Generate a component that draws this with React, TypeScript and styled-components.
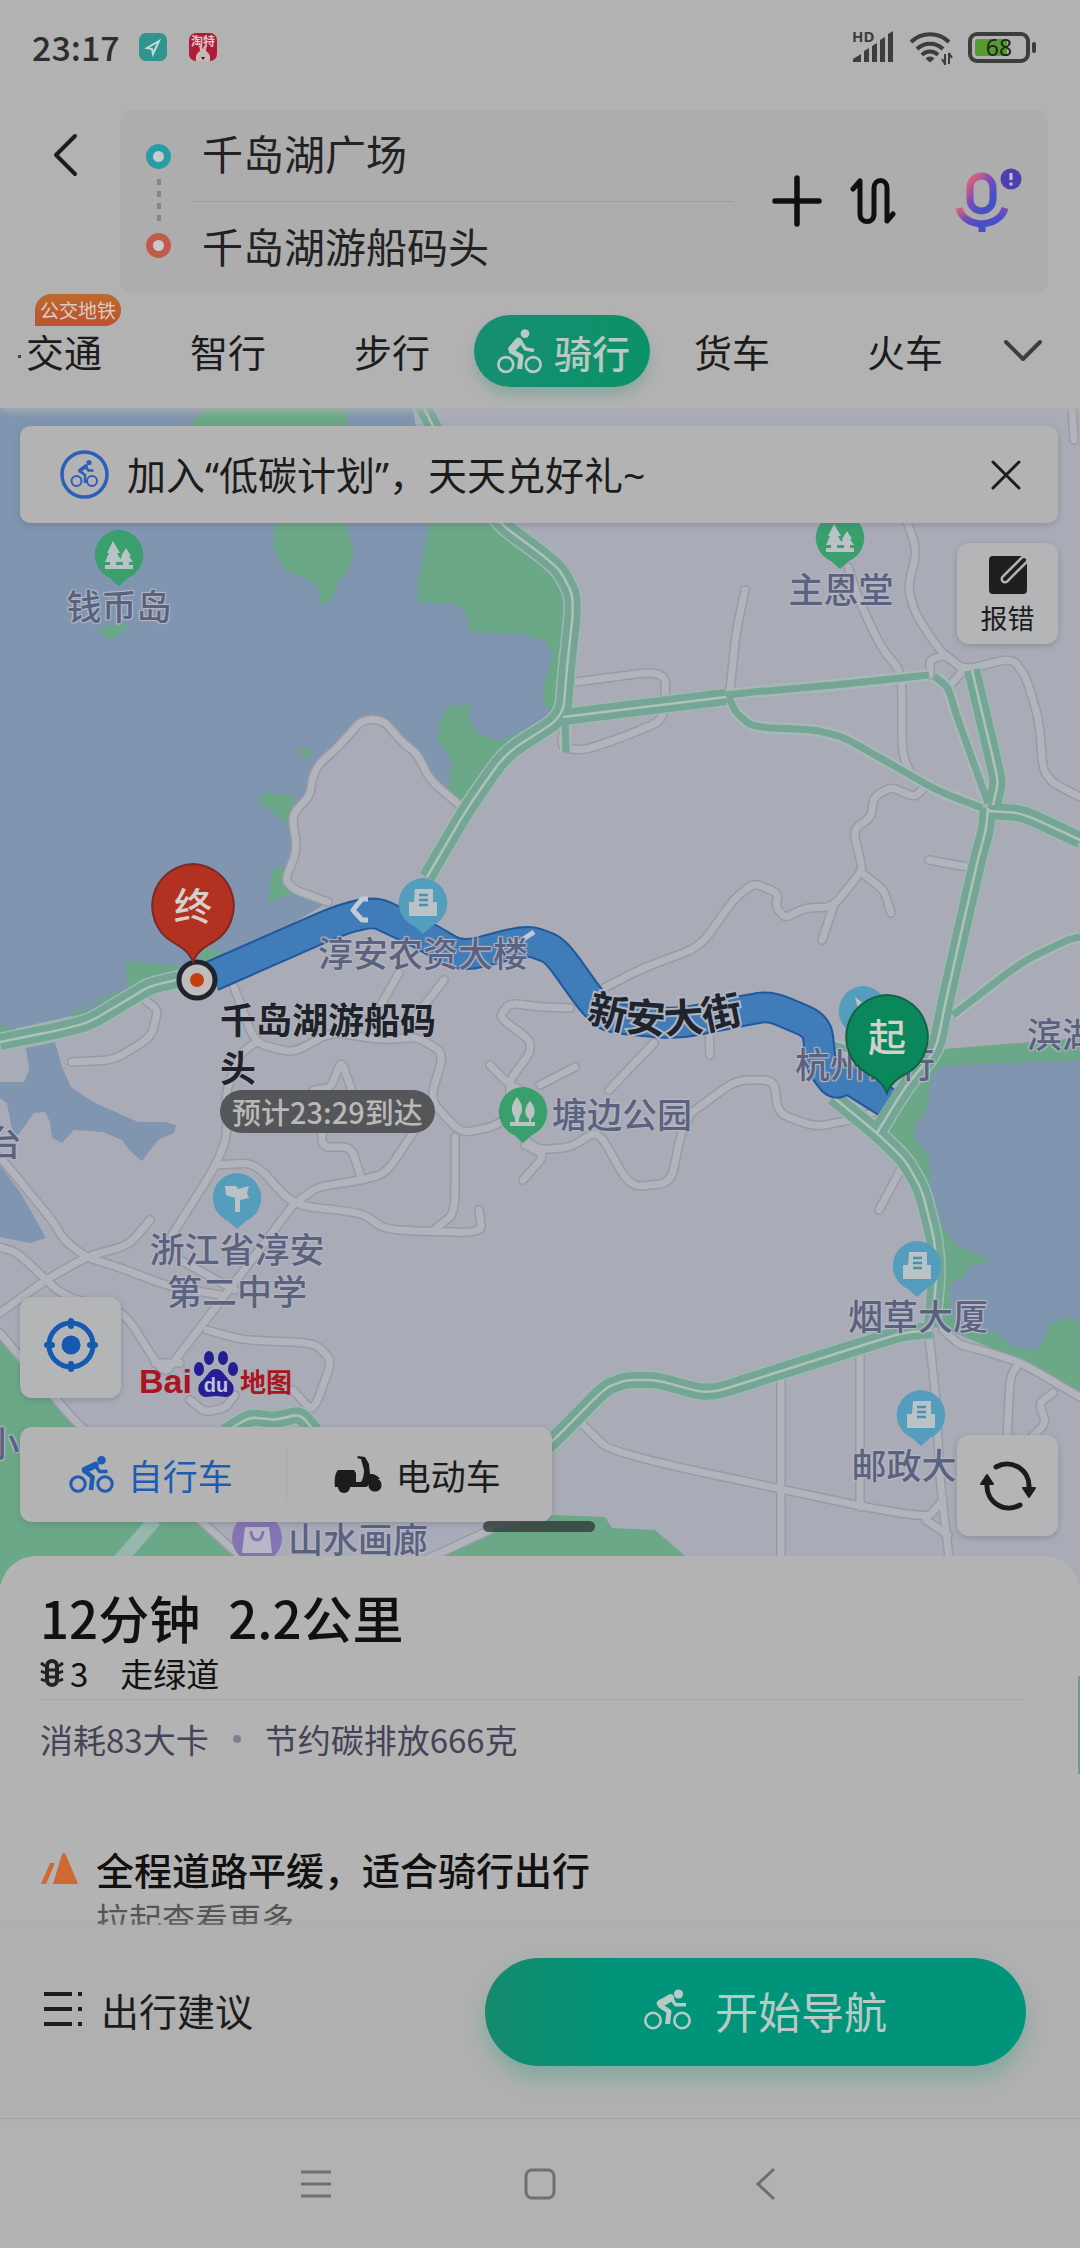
import React from "react";
import styled, { createGlobalStyle } from "styled-components";

const GlobalStyle = createGlobalStyle`
  *, *::before, *::after { box-sizing: border-box; }
  body {
    margin: 0;
    background: #b2b2b2;
    color: #1c1c1c;
    font-family: "Noto Sans CJK SC", "Liberation Sans", sans-serif;
  }
  button, input { font: inherit; color: inherit; }
  button { border: 0; margin: 0; padding: 0; background: none; cursor: pointer; }
  svg { display: block; flex: none; }
  h1, h2, p { margin: 0; font-weight: inherit; font-size: inherit; }
`;

/* ---------- shell ---------- */

const Page = styled.div`
  display: flex;
  flex-direction: column;
  min-height: 100vh;
  overflow: hidden;
`;

const StatusBar = styled.div`
  display: flex;
  align-items: center;
  justify-content: space-between;
  height: 96px;
  padding: 0 42px 2px 32px;
`;

const StatusGroup = styled.div<{ $gap: number }>`
  display: flex;
  align-items: center;
  gap: ${(p) => p.$gap}px;
`;

const Clock = styled.span`
  font-size: 34px;
  line-height: 40px;
  font-weight: 500;
  color: #2e2e2e;
`;

const AppBadge = styled.span<{ $color: string }>`
  display: block;
  width: 28px;
  height: 28px;
  border-radius: 7px;
  overflow: hidden;
  background: ${(p) => p.$color};
`;

/* ---------- header ---------- */

const Header = styled.header`
  position: relative;
  z-index: 3;
  background: #b2b2b2;
  box-shadow: 0 3px 8px rgba(176, 176, 180, 0.9);
`;

const SearchRow = styled.div`
  display: flex;
  align-items: flex-start;
  padding: 14px 32px 0 0;
`;

const BackButton = styled.button`
  display: flex;
  justify-content: center;
  width: 120px;
  padding: 22px 0 0 12px;
`;

const SearchCard = styled.div`
  flex: 1;
  display: flex;
  align-items: center;
  height: 182px;
  padding: 0 26px;
  border-radius: 10px;
  background: #adadad;
`;

const StopMarks = styled.div`
  display: flex;
  flex-direction: column;
  align-items: center;
  gap: 7px;
  width: 25px;
`;

const Ring = styled.span<{ $color: string }>`
  width: 25px;
  height: 25px;
  border-radius: 50%;
  border: 7px solid ${(p) => p.$color};
  background: #c6cccc;
`;

const Dots = styled.span`
  width: 4px;
  height: 44px;
  margin: 3px 0;
  background: repeating-linear-gradient(#858589 0 6px, transparent 6px 12px);
`;

const Stops = styled.div`
  flex: 1;
  min-width: 0;
  margin: 0 38px 0 21px;
`;

const StopInput = styled.input`
  display: block;
  width: 100%;
  height: 93px;
  padding: 0 0 6px 10px;
  border: 0;
  outline: 0;
  background: none;
  font-size: 41px;
  color: #222;
  & + & { border-top: 1px solid #9c9c9c; }
`;

const SearchTools = styled.div`
  display: flex;
  align-items: center;
  gap: 28px;
`;

const MicButton = styled.button`
  margin-left: 30px;
`;

const Tabs = styled.nav`
  display: flex;
  align-items: center;
  height: 72px;
  margin: 23px 0 0;
  padding: 0 36px 0 18px;
`;

const HeaderFoot = styled.div`
  height: 21px;
`;

const Tab = styled.button<{ $before?: number; $after?: number }>`
  position: relative;
  flex: none;
  padding: 0 ${(p) => p.$after ?? 44}px 0 ${(p) => p.$before ?? 44}px;
  font-size: 38px;
  line-height: 56px;
  white-space: nowrap;
`;

const TabDot = styled.span`
  display: inline-block;
  width: 3px;
  height: 3px;
  margin-right: 5px;
  vertical-align: middle;
  background: #444;
`;

const ActiveTab = styled.button`
  flex: none;
  display: flex;
  align-items: center;
  gap: 12px;
  height: 72px;
  padding: 0 20px 0 23px;
  border-radius: 36px;
  background: linear-gradient(100deg, #178f71, #0b9168);
  box-shadow: 0 8px 12px rgba(70, 150, 125, 0.35);
  color: #b9c9c5;
  font-size: 38px;
  font-weight: 500;
  white-space: nowrap;
`;

const TabTag = styled.span`
  position: absolute;
  left: 17px;
  top: -29px;
  height: 32px;
  padding: 0 5px;
  border-radius: 16px 16px 16px 0;
  background: linear-gradient(#bb6a2e, #bb5230);
  color: #dccbc2;
  font-size: 19px;
  line-height: 32px;
`;

const MoreTabs = styled.button`
  margin-left: auto;
`;

/* ---------- map ---------- */

const MapArea = styled.main`
  position: relative;
  flex: 1;
  display: flex;
  flex-direction: column;
  min-height: 1176px;
  padding: 18px 22px 48px 20px;
  overflow: hidden;
  background: #a9acb6;
`;

const MapCanvas = styled.svg`
  position: absolute;
  inset: 0;
  width: 100%;
  height: 100%;
`;

const Marker = styled.div<{ $x: number; $y: number }>`
  position: absolute;
  left: calc(50% + ${(p) => p.$x - 540}px);
  top: ${(p) => p.$y - 408}px;
  transform: translate(-50%, -50%);
`;

const PlaceLabel = styled.span`
  display: block;
  font-size: 35px;
  line-height: 42px;
  font-weight: 500;
  text-align: center;
  white-space: pre;
  color: #5a6280;
  text-shadow: 1px 1px 1px #b4b7c2, -1px -1px 1px #b4b7c2, 1px -1px 1px #b4b7c2, -1px 1px 1px #b4b7c2;
`;

const Destination = styled.div`
  position: absolute;
  left: calc(50% - 320px);
  top: 586px;
  width: 218px;
  font-size: 36px;
  line-height: 48px;
  font-weight: 700;
  color: #20222a;
  text-shadow: 0 0 2px #b9bbc3, 0 0 2px #b9bbc3;
`;

const Eta = styled.span`
  display: block;
  width: max-content;
  height: 43px;
  padding: 0 12px;
  border-radius: 22px;
  background: #55565a;
  color: #b9b9b9;
  font-size: 29px;
  line-height: 43px;
  font-weight: 500;
  text-shadow: none;
`;

const PinText = styled.span`
  position: absolute;
  left: 0;
  right: 0;
  top: 14px;
  text-align: center;
  font-size: 38px;
  line-height: 56px;
  font-weight: 500;
  color: #d5d0cc;
`;

const Banner = styled.section`
  position: relative;
  display: flex;
  align-items: center;
  height: 97px;
  padding: 0 36px 0 40px;
  border-radius: 10px;
  background: #b3b3b4;
  box-shadow: 0 2px 6px rgba(90, 95, 110, 0.35);
`;

const BannerText = styled.p`
  flex: 1;
  margin-left: 18px;
  font-family: "Noto Sans", "Noto Sans CJK SC", sans-serif;
  font-size: 39px;
  line-height: 56px;
  white-space: nowrap;
`;

const FloatButton = styled.button`
  position: relative;
  display: flex;
  flex-direction: column;
  align-items: center;
  justify-content: center;
  gap: 8px;
  flex: none;
  width: 101px;
  height: 101px;
  border-radius: 12px;
  background: #b4b5b6;
  box-shadow: 0 2px 6px rgba(90, 95, 110, 0.35);
  font-size: 27px;
  line-height: 30px;
`;

const MapTop = styled.div`
  display: flex;
  justify-content: flex-end;
  margin: 20px 0 auto;
`;

const MapBottom = styled.div`
  display: flex;
  justify-content: space-between;
  height: 109px;
  margin-top: 29px;
`;

const LocateRow = styled.div`
  position: relative;
  display: flex;
  align-items: flex-end;
  gap: 18px;
`;

const Logo = styled.div`
  display: flex;
  align-items: flex-end;
  gap: 2px;
  color: #a81620;
  font-weight: 700;
`;

const LogoLatin = styled.span`
  font-family: "Liberation Sans", sans-serif;
  font-size: 34px;
  line-height: 34px;
`;

const LogoHan = styled.span`
  font-size: 26px;
  line-height: 34px;
`;

const ModeSwitch = styled.div`
  position: relative;
  display: flex;
  align-items: center;
  width: 532px;
  height: 95px;
  border-radius: 12px;
  background: #b3b3b4;
  box-shadow: 0 2px 6px rgba(90, 95, 110, 0.35);
`;

const Mode = styled.button<{ $active?: boolean }>`
  flex: 1;
  display: flex;
  align-items: center;
  justify-content: center;
  gap: 14px;
  height: 52px;
  padding-right: 4px;
  font-size: 35px;
  color: ${(p) => (p.$active ? "#1d5cb4" : "#1c1c1c")};
  & + & { border-left: 1px solid #a6a6a8; }
`;

const RefreshButton = styled(FloatButton)`
  align-self: flex-end;
`;

const Handle = styled.span`
  position: absolute;
  left: calc(50% - 57px);
  bottom: 52px;
  width: 112px;
  height: 11px;
  border-radius: 6px;
  background: rgba(50, 58, 56, 0.8);
`;

/* ---------- sheet ---------- */

const Sheet = styled.section`
  position: relative;
  z-index: 2;
  margin-top: -28px;
  padding: 29px 56px 0 40px;
  border-radius: 36px 36px 0 0;
  background: #b3b3b3;
  color: #111;
`;

const EdgeMark = styled.span`
  position: absolute;
  right: 0;
  top: 120px;
  width: 2px;
  height: 98px;
  background: #6f9c86;
`;

const Summary = styled.h1`
  display: flex;
  gap: 28px;
  font-size: 51px;
  line-height: 64px;
  font-weight: 500;
`;

const InfoRow = styled.div`
  display: flex;
  align-items: center;
  gap: 6px;
  padding-bottom: 2px;
  font-size: 33px;
  line-height: 48px;
  border-bottom: 1px solid #a8a8a8;
`;

const RoadNote = styled.span`
  margin-left: 26px;
`;

const Stats = styled.p`
  display: flex;
  align-items: center;
  gap: 24px;
  margin-top: 15px;
  font-size: 33px;
  line-height: 48px;
  color: #444357;
`;

const Bullet = styled.span`
  width: 8px;
  height: 8px;
  border-radius: 50%;
  background: #80808c;
`;

const Advice = styled.div`
  display: flex;
  align-items: center;
  gap: 18px;
  margin-top: 82px;
`;

const AdviceTitle = styled.h2`
  font-size: 38px;
  line-height: 48px;
  font-weight: 500;
`;

const Peek = styled.p`
  height: 32px;
  padding-left: 56px;
  overflow: hidden;
  font-size: 33px;
  line-height: 50px;
  color: #555;
`;

const ActionBar = styled.div`
  position: relative;
  z-index: 2;
  display: flex;
  align-items: center;
  justify-content: space-between;
  padding: 33px 54px 52px 42px;
  background: #b0b0b0;
  border-bottom: 1px solid #a2a2a2;
  box-shadow: 0 -2px 6px rgba(160, 160, 160, 0.4);
`;

const TipsButton = styled.button`
  display: flex;
  align-items: center;
  gap: 17px;
  padding-bottom: 6px;
  font-size: 38px;
`;

const StartButton = styled.button`
  display: flex;
  align-items: center;
  justify-content: center;
  gap: 24px;
  width: 55%;
  height: 108px;
  padding: 0 0 5px 20px;
  border-radius: 54px;
  background: linear-gradient(90deg, #168a6c, #00947a 24%);
  box-shadow: 0 12px 20px rgba(60, 160, 130, 0.4);
  color: #b9c9c5;
  font-size: 43px;
`;

const SystemNav = styled.nav`
  display: flex;
  align-items: center;
  justify-content: center;
  gap: 192px;
  height: 129px;
  color: #6f6f6f;
`;

/* ---------- icons ---------- */

const Cyclist = () => (
  <svg width="45" height="37" viewBox="0 0 45 37" fill="none" stroke="currentColor" strokeLinejoin="round">
    <circle cx="9" cy="28" r="7.2" strokeWidth="3" />
    <circle cx="36" cy="28" r="7.2" strokeWidth="3" />
    <circle cx="32.5" cy="4.3" r="4.2" fill="currentColor" stroke="none" />
    <path d="M26.5 9 16 14" strokeWidth="6.5" strokeLinecap="round" />
    <path d="M15.5 15 23.5 21 22 34" strokeWidth="4.6" />
    <path d="M26 9 30.5 15.5H38.500" strokeWidth="3.4" />
  </svg>
);

const UprightCyclist = () => (
  <svg width="45" height="45" viewBox="0 0 45 45" fill="none" stroke="currentColor" strokeLinejoin="round">
    <circle cx="8.800" cy="35.500" r="7.400" strokeWidth="2.600" />
    <circle cx="36.200" cy="35.500" r="7.400" strokeWidth="2.600" />
    <circle cx="28" cy="4.600" r="4.400" fill="currentColor" stroke="none" />
    <path d="M21.500 12.500 15 20" strokeWidth="7.500" strokeLinecap="round" />
    <path d="M13 21.500 24 27.500 22.500 40" strokeWidth="5" />
    <path d="M23 12 28.500 20 37 21.500" strokeWidth="3.600" />
  </svg>
);

const RacingCyclist = () => (
  <svg width="47" height="41" viewBox="0 0 47 41" fill="none" stroke="currentColor" strokeLinejoin="round">
    <circle cx="9" cy="31.500" r="7.700" strokeWidth="2.600" />
    <circle cx="38" cy="31.500" r="7.700" strokeWidth="2.600" />
    <circle cx="34.500" cy="5" r="4.600" fill="currentColor" stroke="none" />
    <path d="M26.500 9 16.500 14.500" strokeWidth="7.500" strokeLinecap="round" />
    <path d="M15.500 16 25 22.500 23.500 35" strokeWidth="5" />
    <path d="M27 9 31.500 15.800H42" strokeWidth="3.400" />
  </svg>
);

const Scooter = () => (
  <svg width="48" height="38" viewBox="0 0 48 38" fill="currentColor">
    <path d="M4 14h16l2 3v9h5c2-3 3-7 3-12L27 3l-4-1 1-2 7 1 4 7 1 10c5 0 8 2 10 5h-5c-4 0-5 3-7 7l-2 1H1C0 24 1 17 4 14Z" />
    <path d="M4 31h12a6 6 0 0 1-12 0Z" />
    <circle cx="41" cy="29" r="6.6" />
  </svg>
);

const BannerBike = () => (
  <svg width="49" height="49" viewBox="0 0 49 49" fill="none" stroke="#2c5fb8">
    <circle cx="24.500" cy="24.500" r="22.500" strokeWidth="3.500" />
    <circle cx="16.500" cy="31" r="5" strokeWidth="2" />
    <circle cx="32" cy="31" r="5" strokeWidth="2" />
    <circle cx="29" cy="12.500" r="2.600" fill="#2c5fb8" stroke="none" />
    <path d="M26 16 20 20.500" strokeWidth="4" strokeLinecap="round" />
    <path d="M19.500 21 25 25v8M25.500 16.500l3 4h5" strokeWidth="2.500" />
  </svg>
);

const SignalIcon = () => (
  <svg width="42" height="34" viewBox="0 0 42 34" fill="#3d3d3d" overflow="visible">
    <text x="0" y="12" fontSize="15" fontWeight="700" fontFamily="Noto Sans, sans-serif">HD</text>
    <path d="M1 32v-3l8-5v8ZM12 32V21l5-3v14ZM20 32V16l5-3v19ZM28 32V10l5-3v25ZM36 32V4l5-3v31Z" />
  </svg>
);

const WifiIcon = () => (
  <svg width="44" height="36" viewBox="0 0 44 36" fill="none" stroke="#3d3d3d" strokeWidth="4">
    <path d="M2 13a27 27 0 0 1 38 0M8 20a18.500 18.500 0 0 1 26 0M13 26a11 11 0 0 1 16 0" />
    <path d="m16.500 29.500 4.500 4 4.500-4a6 6 0 0 0-9 0Z" fill="#3d3d3d" stroke="none" />
    <path d="M36 36V25M40 24v11M33 30l3 5M43 29l-3-5" strokeWidth="2" />
  </svg>
);

const BatteryIcon = () => (
  <svg width="70" height="32" viewBox="0 0 70 32">
    <rect x="2" y="3" width="58" height="27" rx="7" fill="none" stroke="#3d3d3d" strokeWidth="4" />
    <rect x="7" y="8" width="32" height="17" rx="3" fill="#569a34" />
    <rect x="64" y="11" width="4" height="11" rx="2" fill="#3d3d3d" />
    <text x="31" y="25" textAnchor="middle" fontSize="23" fontFamily="Noto Sans, sans-serif" fill="#1b2a14">68</text>
  </svg>
);

const MicIcon = () => (
  <svg width="68" height="68" viewBox="0 0 68 68" fill="none">
    <defs>
      <linearGradient id="mic" x1="0.1" y1="0" x2="0.7" y2="0.8">
        <stop offset="0.1" stopColor="#cf5f80" />
        <stop offset="0.55" stopColor="#7b4bb8" />
        <stop offset="1" stopColor="#4550c8" />
      </linearGradient>
    </defs>
    <rect x="16" y="9" width="23" height="35" rx="11.500" stroke="url(#mic)" strokeWidth="7" />
    <path d="M5 41c5 21 40 21 46 0" stroke="url(#mic)" strokeWidth="7" />
    <path d="M28 56v9" stroke="#4550c8" strokeWidth="7" />
    <circle cx="57" cy="12" r="10.500" fill="#4c3fae" />
    <path d="M57 6v7M57 15.500v3" stroke="#c5c2d8" strokeWidth="3" />
  </svg>
);

type PinKind = "trees" | "office" | "school" | "ferns" | "plain";

const glyphs: Record<PinKind, React.ReactNode> = {
  trees: <path d="m20 12 7 12h-3l5 9h-6v3h7v-3h-4l3-6h-1l5-8 5 8h-2l4 6h-4v3h4v4H12v-4h5v-3h-5l4-9h-2Z" />,
  ferns: <path d="M20 11c5 6 7 13 3 19l-1 3v3h10v-3c-6-4-4-13 1-18 5 5 7 14 1 18v3h4v4H13v-4h5v-3l-1-3c-4-6-2-13 3-19Z" />,
  office: (
    <>
      <path d="M18 12h18v13h4v14H12V25h5Z" />
      <path d="M22 18h9M22 23h9M22 28h9" stroke="#4a90b4" strokeWidth="2.500" />
    </>
  ),
  school: <path d="M14 14h11l2 3 11-3-2 7 2 5-9 2v12h-5V26l-9-3Z" />,
  plain: <path d="m18 12 12 9-9 3Z" />,
};

const Pin = ({ kind, x, y }: { kind: PinKind; x: number; y: number }) => (
  <Marker $x={x} $y={y + 4}>
    <svg width="52" height="58" viewBox="0 0 52 58">
      <path
        d="M26 1a25 25 0 0 0-9 48l9 8 9-8a25 25 0 0 0-9-48Z"
        fill={kind === "trees" || kind === "ferns" ? "#389f6d" : "#559dbd"}
      />
      <g fill="#b9c3c6">{glyphs[kind]}</g>
    </svg>
  </Marker>
);

const EndPin = ({ x, y, color, edge, children }: { x: number; y: number; color: string; edge: string; children: string }) => (
  <Marker $x={x} $y={y}>
    <svg width="88" height="104" viewBox="0 0 88 104">
      <path
        d="M44 2a42 42 0 0 0-22 77c10 6 18 10 22 21 4-11 12-15 22-21a42 42 0 0 0-22-77Z"
        fill={color}
        stroke={edge}
        strokeWidth="2"
      />
    </svg>
    <PinText>{children}</PinText>
  </Marker>
);

/* ---------- map data ---------- */

const smooth = (points: string) => {
  const p = points.split(" ").map((s) => s.split(",").map(Number));
  let d = `M${p[0]}`;
  for (let i = 1; i < p.length - 1; i++) {
    const ax = p[i][0] + (p[i - 1][0] - p[i][0]) * 0.3;
    const ay = p[i][1] + (p[i - 1][1] - p[i][1]) * 0.3;
    const bx = p[i][0] + (p[i + 1][0] - p[i][0]) * 0.3;
    const by = p[i][1] + (p[i + 1][1] - p[i][1]) * 0.3;
    d += `L${ax},${ay}Q${p[i]} ${bx},${by}`;
  }
  return `${d}L${p[p.length - 1]}`;
};

const lanes = [
  "463,808 430,780 418,755 400,740 385,722 372,719 360,722 340,745 318,765 312,780 310,795 292,815 297,850 285,880 295,890 328,902",
  "745,590 736,633 730,690",
  "848,567 860,603 881,647 902,673 902,753 912,777 935,790",
  "903,510 917,550 908,587 915,613 939,650 964,670 1012,658 1026,677 1039,720 1043,770 1053,783 1080,797",
  "930,675 930,660 945,655 964,670 950,685",
  "576,682 666,670 664,720 623,737 585,750 561,748 565,720",
  "922,790 914,797 891,787 874,797 871,817 853,830 862,867 860,873 833,907 805,908 785,918 776,907 778,893 754,883 733,900 700,947 643,968 604,988",
  "862,873 884,890 891,913",
  "833,908 822,940",
  "929,860 967,867",
  "234,987 255,1043 293,1053 331,1032 382,1040 417,1037 444,1053 430,1100 461,1133 492,1127 512,1115",
  "255,1043 241,1053 226,1090 227,1137 215,1167 172,1235",
  "215,1165 255,1163 293,1205 362,1213 386,1230 482,1233 479,1210",
  "293,1205 317,1187 362,1180 386,1173 415,1130 427,1110",
  "362,1180 351,1147 322,1147 322,1120 310,1090 331,1088 341,1060 351,1088",
  "455,1137 455,1213 434,1230",
  "399,973 382,1003",
  "444,980 413,1020",
  "570,1008 540,1007 510,1003 499,1017 530,1040 530,1053 510,1080 510,1095",
  "490,1065 510,1085 540,1100",
  "654,1043 609,1090",
  "709,1030 710,1055",
  "575,1067 540,1085",
  "691,1113 736,1080 774,1080 778,1113 815,1127 850,1120 874,1112",
  "525,1140 540,1150 571,1147 598,1130 630,1187 671,1183 681,1133 691,1113",
  "525,1145 545,1155 523,1180",
  "902,1167 879,1210",
  "72,1062 114,1060 151,1037 158,1010 145,1000",
  "0,1157 52,1220 64,1240 86,1257 118,1267 171,1287 221,1295",
  "150,1220 129,1245 86,1257 46,1280 0,1313",
  "0,1247 18,1253 64,1297 123,1310 164,1375 179,1355 229,1290 293,1205",
  "180,1260 235,1290",
  "155,1363 180,1363",
  "207,1330 243,1340 314,1343 332,1360 318,1400 311,1410 293,1390",
  "0,1333 71,1417 90,1435",
  "200,1520 240,1556",
  "425,1560 490,1530",
  "581,1423 612,1453 926,1520 943,1500",
  "929,1335 936,1400 940,1480 952,1584",
  "781,1377 781,1584",
  "860,1353 860,1507",
  "943,1330 960,1345 981,1350 1022,1363 1080,1397",
  "1019,1363 1010,1377 1007,1440",
  "1053,1393 1039,1403 1046,1423 1029,1440",
  "926,1520 948,1535",
  "190,1400 205,1412 225,1408 235,1395",
  "1072,405 1074,440",
];

const avenues = [
  "420,400 440,440 499,523 540,553 560,570 572,593 573,613 567,667 563,717 506,753 468,807 427,877",
  "563,717 726,697",
  "972,670 995,767 998,783 993,805",
  "988,811 1022,813 1080,840",
  "988,808 986,830 979,855 967,907 946,1000 936,1050 905,1087 877,1133",
  "833,1097 877,1133 905,1160 922,1190 934,1238 937,1270 932,1327",
  "932,1330 902,1333 857,1347 778,1372 719,1391 700,1392 657,1380 626,1380 605,1388 554,1440 520,1470",
  "0,1042 60,1030 90,1022 130,998 150,986 185,978",
  "225,1432 250,1417 275,1420 300,1414 318,1435",
];

const singles = [
  "726,695 753,692 836,685 929,675",
  "934,676 948,687 957,717 988,803",
  "729,698 736,713 753,727 815,730 843,737 884,760 936,790 982,808",
  "953,1015 1022,962 1067,940 1080,937",
  "565,717 566,752",
  "833,1045 850,1050",
];

const route = "212,976 367,908 420,933 461,957 527,940 555,950 593,1003 610,1018 678,1024 736,1012 770,1006 817,1026 821,1065 835,1084 848,1078 886,1102";

const MapDrawing = () => (
  <MapCanvas viewBox="0 408 1080 1176" preserveAspectRatio="xMidYMin slice" aria-hidden="true">
    <g fill="#7f95b0">
      <path d="M0 400H412L430 522 560 560 568 640 560 717 510 745 463 808 430 780 418 755 400 740 385 722 372 719 340 745 318 765 310 795 292 815 297 850 285 880 328 902 220 968 128 990 90 1012 0 1032Z" />
      <path d="M26 1048 55 1042 62 1067 71 1087 93 1102 138 1122 165 1122 176 1125 174 1133 158 1140 142 1161 129 1150 122 1140 103 1132 74 1130 62 1143 52 1138 50 1122 45 1112 34 1113 24 1127 14 1140 7 1103 0 1098V1082H24L29 1070Z" />
      <path d="M0 1165 22 1195 46 1238 30 1243 0 1237Z" />
    </g>
    <path d="M412 400 440 400 450 440 560 570 500 522 430 522Z" fill="#a9acb6" />
    <g fill="#6ba888">
      <path d="M190 425 205 408H350L345 430H190ZM275 520H345L354 555 345 575 337 582 333 598 321 606 316 584 285 570 273 545Z" />
      <path d="M430 520H495L540 555 565 590 568 640 563 717 556 714 544 705 543 690 553 655 545 640 520 634 470 632 466 612 455 604 417 602 419 575Z" />
      <path d="M440 720 450 706 472 704 468 718 480 735 500 741 560 712 506 753 465 806 448 790 452 760 438 740Z" />
      <path d="M97 628 130 623 122 633 110 640ZM296 750 313 748 309 760ZM258 800 265 792 295 797 288 825ZM272 870 284 866 283 880 298 893 268 902ZM125 961 178 966 190 975 140 990 70 1012 128 988ZM0 1025 18 1030 0 1034ZM200 945 228 955 210 970 200 970ZM70 1012 100 1010 75 1020Z" />
      <path d="M944 1049 1080 1038V1400L1020 1360 960 1335 935 1325 940 1240 930 1195 905 1150 877 1133Z" />
      <path d="M0 1340 90 1432 210 1522 245 1560V1584H0ZM245 1560 420 1556 490 1530 555 1515 605 1517 612 1528 655 1530 690 1560V1584H245Z" />
    </g>
    <path
      d="M1080 1060 955 1065 939 1068 931 1077 926 1113 915 1123 914 1137 929 1157 931 1197 940 1220 953 1243 974 1253 991 1260 967 1267 964 1278 950 1283V1313L967 1330 998 1333 1012 1347 1036 1350 1046 1337 1050 1323 1067 1318 1080 1322Z"
      fill="#7f95b0"
    />
    <path d="m240 1556 15-10-50-28H490v12l-60 28Z" fill="#a9acb8" />
    <path d="M120 1560 155 1520" stroke="#97b7ac" strokeWidth="14" />
    <g fill="none" strokeLinecap="round">
      {lanes.map((l) => <path key={l} d={smooth(l)} stroke="#989aa5" strokeWidth="10" />)}
      {lanes.map((l) => <path key={l} d={smooth(l)} stroke="#b2b4bb" strokeWidth="7" />)}
    </g>
    <g fill="none">
      {singles.map((l) => <path key={l} d={smooth(l)} stroke="#a7b8b6" strokeWidth="12" />)}
      {avenues.map((l) => <path key={l} d={smooth(l)} stroke="#9cbab1" strokeWidth="19" />)}
      {singles.map((l) => <path key={l} d={smooth(l)} stroke="#74a595" strokeWidth="7" />)}
      {avenues.map((l) => <path key={l} d={smooth(l)} stroke="#74a595" strokeWidth="16" />)}
      {avenues.map((l) => <path key={l} d={smooth(l)} stroke="#acc3b9" strokeWidth="2.500" />)}
    </g>
    <g fill="none" strokeLinejoin="round">
      <path d={smooth(route)} stroke="#20589b" strokeWidth="32" />
      <path d={smooth(route)} stroke="#3f7cb8" strokeWidth="28" />
      <path d="M368 899h-6l-9 11 9 10h6" stroke="#c0cbd6" strokeWidth="5" />
      <path d="m534 932-12 8" stroke="#c0cbd6" strokeWidth="5" />
    </g>
    <circle cx="197" cy="980" r="18" fill="#bebcbc" stroke="#22232a" strokeWidth="5" />
    <circle cx="197" cy="980" r="7" fill="#c43e10" />
  </MapCanvas>
);

const StreetName = () => (
  <MapCanvas viewBox="0 408 1080 1176" preserveAspectRatio="xMidYMin slice">
    <path id="street" d="M586 1021Q672 1048 770 1014" fill="none" />
    <text
      fontSize="40"
      fontWeight="700"
      fill="#20242e"
      stroke="#aeb4bf"
      strokeWidth="4"
      paintOrder="stroke"
      fontFamily="Noto Sans CJK SC, sans-serif"
    >
      <textPath href="#street">新安大街</textPath>
    </text>
  </MapCanvas>
);

const labels: { x: number; y: number; text: string }[] = [
  { x: 119, y: 605, text: "钱币岛" },
  { x: 841, y: 588, text: "主恩堂" },
  { x: 423, y: 952, text: "淳安农资大楼" },
  { x: 622, y: 1113, text: "塘边公园" },
  { x: 237, y: 1269, text: "浙江省淳安\n第二中学" },
  { x: 918, y: 1315, text: "烟草大厦" },
  { x: 904, y: 1464, text: "邮政大" },
  { x: 358, y: 1538, text: "山水画廊" },
  { x: 1062, y: 1033, text: "滨湖" },
  { x: 865, y: 1063, text: "杭州银行" },
  { x: 4, y: 1141, text: "台" },
  { x: 2, y: 1442, text: "小" },
];

/* ---------- page ---------- */

export default function App() {
  return (
    <>
      <GlobalStyle />
      <Page>
        <Header>
          <StatusBar>
            <StatusGroup $gap={19}>
              <Clock>23:17</Clock>
              <StatusGroup $gap={22}>
                <AppBadge $color="#31958f">
                  <svg width="28" height="28" viewBox="0 0 28 28" fill="none" stroke="#c3dad8" strokeWidth="2">
                    <path d="m20 8-12 7 5 1 1 5Z" />
                  </svg>
                </AppBadge>
                <AppBadge $color="#b01c38">
                  <svg width="28" height="28" viewBox="0 0 28 28">
                    <text x="14" y="13" textAnchor="middle" fontSize="12" fontWeight="700" fill="#dcc9cb">淘特</text>
                    <path d="M11 12c3 0 2 3 3 4 1-1 0-4 3-4 1 2 0 4 0 6 5 3 4 7 4 10H7c0-3-1-7 4-10 0-2-1-4 0-6Z" fill="#c9b9b2" />
                    <path d="M12 24h4l-2 3Z" fill="#301418" />
                  </svg>
                </AppBadge>
              </StatusGroup>
            </StatusGroup>
            <StatusGroup $gap={15}>
              <SignalIcon />
              <WifiIcon />
              <BatteryIcon />
            </StatusGroup>
          </StatusBar>

          <SearchRow>
            <BackButton aria-label="返回">
              <svg width="30" height="46" viewBox="0 0 30 46" fill="none" stroke="#1c1c1c" strokeWidth="4" strokeLinecap="round" strokeLinejoin="round">
                <path d="M24 4 5 23l19 19" />
              </svg>
            </BackButton>
            <SearchCard>
              <StopMarks>
                <Ring $color="#2a9ca6" />
                <Dots />
                <Ring $color="#c25a4c" />
              </StopMarks>
              <Stops>
                <StopInput aria-label="起点" defaultValue="千岛湖广场" />
                <StopInput aria-label="终点" defaultValue="千岛湖游船码头" />
              </Stops>
              <SearchTools>
                <button aria-label="添加途经点">
                  <svg width="50" height="52" viewBox="0 0 50 52" stroke="#101010" strokeWidth="5.500" strokeLinecap="round">
                    <path d="M25 3v46M3 26h44" />
                  </svg>
                </button>
                <button aria-label="交换起终点">
                  <svg width="46" height="48" viewBox="0 0 46 48" fill="none" stroke="#101010" strokeWidth="5" strokeLinecap="round" strokeLinejoin="round">
                    <path d="M3 13 11 4v32a8 8 0 0 0 16 0V11a7 7 0 0 1 13 0" stroke="none" />
                    <path d="M3 12 10 4v33c0 10 14 10 14 0V11c0-10 13-10 13 0v33l6-7" />
                  </svg>
                </button>
                <MicButton aria-label="语音输入"><MicIcon /></MicButton>
              </SearchTools>
            </SearchCard>
          </SearchRow>

          <Tabs>
            <Tab $before={0}>
              <TabTag>公交地铁</TabTag>
              <TabDot />交通
            </Tab>
            <Tab>智行</Tab>
            <Tab>步行</Tab>
            <ActiveTab aria-current="page">
              <UprightCyclist />
              骑行
            </ActiveTab>
            <Tab>货车</Tab>
            <Tab $before={53} $after={0}>火车</Tab>
            <MoreTabs aria-label="更多">
              <svg width="42" height="26" viewBox="0 0 42 26" fill="none" stroke="#3d3d42" strokeWidth="4" strokeLinecap="round" strokeLinejoin="round">
                <path d="m4 4 17 17L38 4" />
              </svg>
            </MoreTabs>
          </Tabs>
          <HeaderFoot />
        </Header>

        <MapArea>
          <MapDrawing />
          <Pin kind="trees" x={119} y={554} />
          <Pin kind="trees" x={840} y={537} />
          <Pin kind="office" x={423} y={902} />
          <Pin kind="ferns" x={523} y={1111} />
          <Pin kind="school" x={237} y={1197} />
          <Pin kind="office" x={917} y={1265} />
          <Pin kind="office" x={921} y={1414} />
          <Pin kind="plain" x={863} y={1010} />
          <Marker $x={257} $y={1538}>
            <svg width="52" height="52" viewBox="0 0 52 52">
              <circle cx="26" cy="26" r="25" fill="#8574b4" />
              <path d="M14 15h24l3 26H11Z" fill="#b9b6c6" />
              <path d="M20 19c0 12 12 12 12 0" fill="none" stroke="#8574b4" strokeWidth="3" />
            </svg>
          </Marker>
          {labels.map((l) => (
            <Marker key={l.text} $x={l.x} $y={l.y}>
              <PlaceLabel>{l.text}</PlaceLabel>
            </Marker>
          ))}
          <StreetName />
          <Destination>
            千岛湖游船码头
            <Eta>预计23:29到达</Eta>
          </Destination>
          <EndPin x={193} y={914} color="#b33120" edge="#7d2a22">终</EndPin>
          <EndPin x={887} y={1045} color="#0b875c" edge="#126246">起</EndPin>

          <Banner>
            <BannerBike />
            <BannerText>加入“低碳计划”，天天兑好礼~</BannerText>
            <button aria-label="关闭">
              <svg width="32" height="32" viewBox="0 0 32 32" stroke="#1c1c1c" strokeWidth="3" strokeLinecap="round">
                <path d="m3 3 26 26M29 3 3 29" />
              </svg>
            </button>
          </Banner>
          <MapTop>
            <FloatButton>
              <svg width="40" height="40" viewBox="0 0 40 40">
                <rect x="1" y="1" width="38" height="38" rx="4" fill="#1f1f20" />
                <path d="M36 5 17 24" stroke="#b4b5b6" strokeWidth="9" strokeLinecap="round" />
                <path d="M36 5 17 24" stroke="#1f1f20" strokeWidth="4" strokeLinecap="round" />
              </svg>
              报错
            </FloatButton>
          </MapTop>

          <LocateRow>
            <FloatButton aria-label="定位">
              <svg width="54" height="60" viewBox="0 0 54 60" fill="none" stroke="#1659b0" strokeWidth="5">
                <circle cx="27" cy="27" r="22" />
                <circle cx="27" cy="27" r="9.500" fill="#1659b0" stroke="none" />
                <path d="M27 3v5M27 46v5M3 27h5M46 27h5" strokeWidth="6" strokeLinecap="round" />
              </svg>
            </FloatButton>
            <Logo>
              <LogoLatin>Bai</LogoLatin>
              <svg width="44" height="48" viewBox="0 0 44 48">
                <g fill="#241d93">
                  <ellipse cx="15" cy="8" rx="5" ry="7" />
                  <ellipse cx="29" cy="8" rx="5" ry="7" />
                  <ellipse cx="5" cy="19" rx="5" ry="7" />
                  <ellipse cx="39" cy="19" rx="5" ry="7" />
                  <path d="M22 19c7 0 9 8 15 13 5 5 3 15-5 15-4 0-6-1-10-1s-6 1-10 1c-8 0-10-10-5-15 6-5 8-13 15-13Z" />
                </g>
                <text x="22" y="42" textAnchor="middle" fontSize="20" fontWeight="700" fontFamily="Liberation Sans, sans-serif" fill="#c3c3d6">du</text>
              </svg>
              <LogoHan>地图</LogoHan>
            </Logo>
          </LocateRow>
          <MapBottom>
            <ModeSwitch>
              <Mode $active aria-pressed="true"><Cyclist />自行车</Mode>
              <Mode aria-pressed="false"><Scooter />电动车</Mode>
            </ModeSwitch>
            <RefreshButton aria-label="刷新">
              <svg width="56" height="56" viewBox="0 0 56 56" fill="none" stroke="#1c1c1c" strokeWidth="5" strokeLinecap="round">
                <path d="M16 9a22 22 0 0 1 33 20M40 47A22 22 0 0 1 7 27" />
                <path d="M43 30h12l-6 9ZM1 26h12L7 17Z" fill="#1c1c1c" strokeWidth="2" strokeLinejoin="round" />
              </svg>
            </RefreshButton>
          </MapBottom>
          <Handle />
        </MapArea>

        <Sheet>
          <EdgeMark />
          <Summary><span>12分钟</span><span>2.2公里</span></Summary>
          <InfoRow>
            <svg width="24" height="28" viewBox="0 0 24 28" fill="none" stroke="#222" strokeWidth="3">
              <rect x="7" y="2" width="10" height="24" rx="5" strokeWidth="4" />
              <path d="M9 11h6M9 18h6M1 4l4 3M1 12l4 2M1 20l4 2M23 4l-4 3M23 12l-4 2M23 20l-4 2" />
            </svg>
            <span>3</span>
            <RoadNote>走绿道</RoadNote>
          </InfoRow>
          <Stats><span>消耗83大卡</span><Bullet /><span>节约碳排放666克</span></Stats>
          <Advice>
            <svg width="38" height="34" viewBox="0 0 38 34" fill="#cf6a33">
              <path d="M22 2c2-2 3-1 4 1l12 29H13ZM10 11h5L6 32H1Z" />
            </svg>
            <AdviceTitle>全程道路平缓，适合骑行出行</AdviceTitle>
          </Advice>
          <Peek>拉起查看更多</Peek>
        </Sheet>

        <ActionBar>
          <TipsButton>
            <svg width="42" height="36" viewBox="0 0 42 36" stroke="#1c1c1c" strokeWidth="4">
              <path d="M2 3h28M2 18h28M2 33h28M36 3h4M36 18h4M36 33h4" />
            </svg>
            出行建议
          </TipsButton>
          <StartButton><RacingCyclist />开始导航</StartButton>
        </ActionBar>
        <SystemNav>
          <button aria-label="最近任务">
            <svg width="32" height="30" viewBox="0 0 32 30" stroke="currentColor" strokeWidth="3">
              <path d="M1 3h30M1 15h30M1 27h30" />
            </svg>
          </button>
          <button aria-label="主屏幕">
            <svg width="32" height="32" viewBox="0 0 32 32" fill="none" stroke="currentColor" strokeWidth="3">
              <rect x="2" y="2" width="28" height="28" rx="6" />
            </svg>
          </button>
          <button aria-label="后退">
            <svg width="32" height="34" viewBox="0 0 32 34" fill="none" stroke="currentColor" strokeWidth="3">
              <path d="M26 2 10 17l16 15" />
            </svg>
          </button>
        </SystemNav>
      </Page>
    </>
  );
}
